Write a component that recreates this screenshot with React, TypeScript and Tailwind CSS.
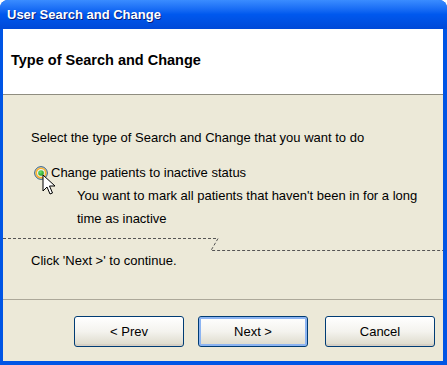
import React from "react";

function Radio() {
  return (
    <svg width="14" height="14" viewBox="0 0 14 14" className="shrink-0">
      <defs>
        <radialGradient id="rbg" cx="0.4" cy="0.4" r="0.7">
          <stop offset="0" stopColor="#ffffff" />
          <stop offset="1" stopColor="#d8d4c4" />
        </radialGradient>
        <radialGradient id="dot" cx="0.4" cy="0.35" r="0.7">
          <stop offset="0" stopColor="#6fe06f" />
          <stop offset="1" stopColor="#1a9b1a" />
        </radialGradient>
      </defs>
      <circle cx="7" cy="7" r="6.3" fill="url(#rbg)" stroke="#1c5180" strokeWidth="1" />
      <circle cx="7" cy="7" r="4.8" fill="none" stroke="#f8b330" strokeWidth="1.6" />
      <circle cx="7" cy="7" r="2.8" fill="url(#dot)" />
    </svg>
  );
}

function Cursor() {
  return (
    <svg width="14" height="22" viewBox="0 0 14 22" className="absolute left-[39px] top-[13px]">
      <path d="M1 1 L1 17 L5 13 L8 20 L10.5 19 L7.5 12 L13 12 Z" fill="#ffffff" stroke="#000000" strokeWidth="1" strokeLinejoin="miter" />
    </svg>
  );
}

function Btn({ children, def }: { children: React.ReactNode; def?: boolean }) {
  return (
    <div
      className={
        "w-[110px] h-[31px] rounded-[3px] border border-[#003c74] flex items-center justify-center text-[13px] text-black bg-gradient-to-b from-[#ffffff] via-[#f4f3ee] to-[#dcd9ca] " +
        (def ? "shadow-[inset_0_0_0_2px_#8cb4f2]" : "shadow-[inset_0_-2px_0_#d6d0c5]")
      }
    >
      {children}
    </div>
  );
}

export default function App() {
  return (
    <div
      className="w-[447px] h-[365px] rounded-t-[8px] bg-[#0055e5] flex flex-col overflow-hidden"
      style={{ fontFamily: '"Liberation Sans", Arial, sans-serif' }}
    >
      <div className="h-[29px] shrink-0 flex items-center pl-[7px] bg-gradient-to-b from-[#3a8cff] via-[#0058ee] to-[#0049d8]">
        <span className="text-white font-bold text-[13px] [text-shadow:1px_1px_0_#0a1f7a]">
          User Search and Change
        </span>
      </div>
      <div className="flex-1 ml-[3px] mr-[4px] mb-[4px] bg-[#ece9d8] flex flex-col">
        <div className="h-[66px] shrink-0 bg-white border-b border-[#8f8d80] pl-[8px] pt-[23px]">
          <div className="font-bold text-[14.5px] leading-[16px] text-black">Type of Search and Change</div>
        </div>
        <div className="flex-1 flex flex-col text-[13px] text-black">
          <div className="pl-[28px] pt-[31px] leading-[23px]">Select the type of Search and Change that you want to do</div>
          <div className="mt-[12px] pl-[31px] flex items-center leading-[23px] relative">
            <Radio />
            <span className="ml-[3px]">Change patients to inactive status</span>
            <Cursor />
          </div>
          <div className="pl-[74px] leading-[23px]">
            You want to mark all patients that haven't been in for a long
            <br />
            time as inactive
          </div>
          <svg width="440" height="18" viewBox="0 0 440 18" className="mt-[4px] shrink-0">
            <path d="M0 4.5 H215 L208 16.5 H440" fill="none" stroke="#555555" strokeWidth="1" strokeDasharray="3 2" />
          </svg>
          <div className="pl-[28px] leading-[16px] mt-[1px]">Click 'Next &gt;' to continue.</div>
        </div>
        <div className="h-[62px] shrink-0 border-t border-[#aca899] flex items-start pt-[16px] pl-[71px] gap-[14px]">
          <Btn>&lt; Prev</Btn>
          <Btn def>Next &gt;</Btn>
          <div className="ml-[3px]">
            <Btn>Cancel</Btn>
          </div>
        </div>
      </div>
    </div>
  );
}
